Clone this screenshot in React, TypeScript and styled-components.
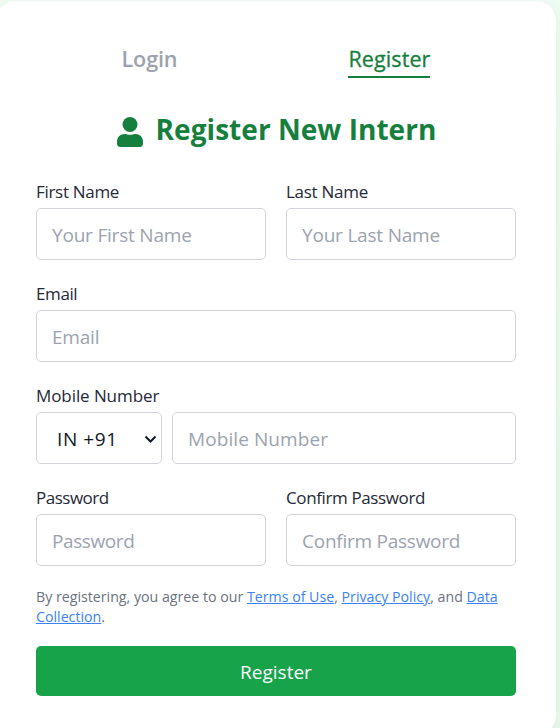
import React from "react";
import styled, { createGlobalStyle } from "styled-components";

const GlobalStyle = createGlobalStyle`
  *, *::before, *::after { box-sizing: border-box; }
  html, body { margin: 0; height: 100%; overflow: hidden; }
  body {
    background: linear-gradient(180deg, #effdf4 0%, #ebfaf1 100%);
    font-family: "Segoe UI", "Open Sans", "Noto Sans", sans-serif;
    color: #1f2937;
  }
  input, select, button { font-family: inherit; }
`;

const Page = styled.main`
  height: 728px;
  overflow: hidden;
`;

const Card = styled.form`
  width: 560px;
  height: 734px;
  margin: 1px 0 0 -4px;
  padding: 40px;
  border-radius: 20px;
  background: #fff;
  box-shadow: 0 10px 30px rgba(0, 60, 20, 0.08);
`;

const Tabs = styled.nav`
  display: flex;
  justify-content: space-around;
  height: 37px;
`;

const Tab = styled.a<{ $active?: boolean }>`
  height: 37px;
  padding-top: 1px;
  font-size: ${(p) => (p.$active ? 21.5 : 21.6)}px;
  line-height: 34px;
  letter-spacing: ${(p) => (p.$active ? 0.1 : -0.15)}px;
  font-weight: ${(p) => (p.$active ? 500 : 600)};
  -webkit-text-stroke: ${(p) => (p.$active ? "0.3px currentColor" : "0")};
  color: ${(p) => (p.$active ? "#15803d" : "#9ca3af")};
  border-bottom: 2px solid ${(p) => (p.$active ? "#15803d" : "transparent")};
`;

const Title = styled.h1`
  display: flex;
  align-items: center;
  justify-content: center;
  gap: 12px;
  height: 40px;
  margin: 32px 0 30px;
  color: #15803d;
  font-size: 28px;
  line-height: 38px;
  letter-spacing: 0.04px;
  font-weight: 700;
  white-space: nowrap;

  span { padding-bottom: 2px; }
  svg { width: 28px; height: 30px; margin-top: 4px; }
`;

const Fields = styled.div`
  display: grid;
  grid-template-columns: 1fr 1fr;
  gap: 22px 20px;
`;

const Field = styled.label<{ $wide?: boolean }>`
  display: block;
  grid-column: ${(p) => (p.$wide ? "1 / -1" : "auto")};
  min-width: 0;
`;

const Label = styled.span<{ $track?: number }>`
  display: block;
  height: 28px;
  font-size: 17px;
  line-height: 24px;
  letter-spacing: ${(p) => p.$track ?? 0}px;
`;

const Input = styled.input<{ $track?: number }>`
  display: block;
  width: 100%;
  min-width: 0;
  height: 52px;
  padding: 2px 15px 0;
  border: 1px solid #d1d5db;
  border-radius: 5px;
  background: #fff;
  font-size: 19px;
  letter-spacing: ${(p) => p.$track ?? 0}px;
  outline: none;

  &::placeholder { color: #9ca3af; opacity: 1; }
`;

const PhoneRow = styled.div`
  display: grid;
  grid-template-columns: 126px 1fr;
  gap: 10px;
`;

const SelectBox = styled.div`
  display: grid;
  align-items: center;

  > * { grid-area: 1 / 1; }
  svg { justify-self: end; margin: 2px 5px 0 0; pointer-events: none; }
`;

const Select = styled.select`
  appearance: none;
  width: 100%;
  height: 52px;
  padding: 2px 20px 0;
  border: 1px solid #d1d5db;
  border-radius: 5px;
  background: #fff;
  color: #111827;
  font-size: 19px;
  letter-spacing: 0.6px;
`;

const Terms = styled.p`
  margin: 21px 0 0;
  color: #6b7280;
  font-size: 14.2px;
  line-height: 20px;

  a { color: #3b82f6; text-decoration: underline; }
`;

const Submit = styled.button`
  display: block;
  width: 100%;
  height: 50px;
  margin-top: 19px;
  padding: 2px 0 0;
  border: 0;
  border-radius: 5px;
  background: #16a34a;
  color: #fff;
  font-size: 19px;
  font-weight: 500;
`;

const UserIcon = () => (
  <svg viewBox="0 0 28 30" fill="currentColor" aria-hidden="true">
    <circle cx="14" cy="7.5" r="7.5" />
    <path d="M1 26.5v-2C1 20 4.2 17 8.7 17c1.6 0 3 .8 5.3.8s3.700-.8 5.300-.8c4.500 0 7.700 3 7.700 7.500v2c0 2-1.200 3.500-3.200 3.500H4.200C2.200 30 1 28.500 1 26.500z" />
  </svg>
);

const Chevron = () => (
  <svg width="13" height="9" viewBox="0 0 13 9" fill="none" stroke="#111827" strokeWidth="2" aria-hidden="true">
    <path d="M1.500 1.500 6.500 6.500 11.500 1.500" />
  </svg>
);

export default function App() {
  return (
    <Page>
      <GlobalStyle />
      <Card>
        <Tabs>
          <Tab>Login</Tab>
          <Tab $active>Register</Tab>
        </Tabs>
        <Title>
          <UserIcon />
          <span>Register New Intern</span>
        </Title>
        <Fields>
          <Field>
            <Label $track={-0.3}>First Name</Label>
            <Input $track={-0.2} placeholder="Your First Name" />
          </Field>
          <Field>
            <Label $track={-0.27}>Last Name</Label>
            <Input $track={-0.2} placeholder="Your Last Name" />
          </Field>
          <Field $wide>
            <Label $track={-0.4}>Email</Label>
            <Input $track={-0.2} placeholder="Email" />
          </Field>
          <Field as="div" $wide>
            <Label $track={-0.08}>Mobile Number</Label>
            <PhoneRow>
              <SelectBox>
                <Select defaultValue="IN">
                  <option value="IN">IN +91</option>
                </Select>
                <Chevron />
              </SelectBox>
              <Input $track={0.08} placeholder="Mobile Number" />
            </PhoneRow>
          </Field>
          <Field>
            <Label $track={-0.5}>Password</Label>
            <Input $track={-0.4} type="password" placeholder="Password" />
          </Field>
          <Field>
            <Label $track={-0.38}>Confirm Password</Label>
            <Input $track={-0.25} type="password" placeholder="Confirm Password" />
          </Field>
        </Fields>
        <Terms>
          By registering, you agree to our <a href="#terms">Terms of Use</a>, <a href="#privacy">Privacy Policy</a>, and{" "}
          <a href="#data">Data Collection</a>.
        </Terms>
        <Submit type="button">Register</Submit>
      </Card>
    </Page>
  );
}
